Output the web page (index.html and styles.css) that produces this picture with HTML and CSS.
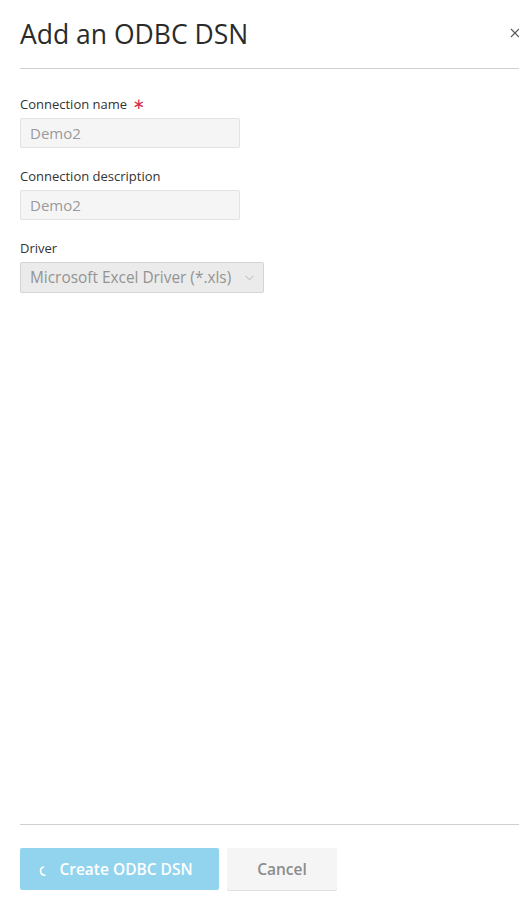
FILE: index.html
```html
<!DOCTYPE html>
<html>
<head>
<meta charset="utf-8">
<link rel="stylesheet" href="styles.css">
</head>
<body>
<div class="dialog">
  <div class="header">
    <h1 class="title">Add an ODBC DSN</h1>
    <svg class="close" width="10" height="10" viewBox="0 0 10 10"><path d="M1 1 L9 9 M9 1 L1 9" fill="none" stroke="#555" stroke-width="1.1"/></svg>
  </div>
  <div class="divider"></div>
  <form class="form">
    <div class="field">
      <label class="label">Connection name <span class="req">∗</span></label>
      <div class="input">Demo2</div>
    </div>
    <div class="field">
      <label class="label">Connection description</label>
      <div class="input">Demo2</div>
    </div>
    <div class="field">
      <label class="label">Driver</label>
      <div class="select">
        <span>Microsoft Excel Driver (*.xls)</span>
        <svg class="chev" width="9" height="6" viewBox="0 0 9 6"><path d="M0.5 0.8 L4.5 4.8 L8.5 0.8" fill="none" stroke="#b5b5b5" stroke-width="1"/></svg>
      </div>
    </div>
  </form>
  <div class="spacer"></div>
  <div class="divider"></div>
  <div class="footer">
    <button class="btn primary" type="button">
      <svg class="spin" width="10" height="12" viewBox="0 0 10 12"><path d="M5.5 2 A4.2 4.2 0 0 0 7 10.2" fill="none" stroke="#fff" stroke-width="1.6" stroke-linecap="round"/></svg>
      Create ODBC DSN
    </button>
    <button class="btn secondary" type="button">Cancel</button>
  </div>
</div>
</body>
</html>
```
FILE: styles.css
```css
html, body {
  margin: 0;
  padding: 0;
  height: 100%;
  overflow: hidden;
  background: #fff;
}
body {
  font-family: "Open Sans", "Liberation Sans", sans-serif;
  color: #333;
}
.dialog {
  width: 502px;
  height: 910px;
  padding: 0 20px;
  display: flex;
  flex-direction: column;
}
.header {
  display: flex;
  align-items: center;
  justify-content: space-between;
  height: 68px;
}
.title {
  margin: 0;
  font-size: 26.5px;
  font-weight: 400;
  color: #2b2b2b;
  line-height: 34px;
  padding-bottom: 1px;
}
.close {
  margin-right: 2px;
  margin-bottom: 2px;
}
.divider {
  height: 1px;
  background: #cfcfcf;
  flex: none;
}
.form {
  padding-top: 26px;
  display: flex;
  flex-direction: column;
  gap: 19px;
}
.field {
  display: flex;
  flex-direction: column;
}
.label {
  font-size: 13px;
  line-height: 18px;
  color: #333;
  margin-bottom: 5px;
}
.req {
  color: #d6304f;
  font-size: 15px;
  font-family: "DejaVu Sans", sans-serif;
  margin-left: 2px;
}
.input {
  width: 200px;
  height: 28px;
  border: 1px solid #e2e2e2;
  background: #f5f5f5;
  border-radius: 2px;
  padding: 0 9px;
  font-size: 15px;
  line-height: 28px;
  color: #9a9a9a;
}
.select {
  width: 224px;
  height: 29px;
  border: 1px solid #d4d4d4;
  background: #ebebeb;
  border-radius: 2px;
  padding: 0 9px;
  font-size: 15.4px;
  line-height: 29px;
  color: #939393;
  display: flex;
  align-items: center;
  justify-content: space-between;
}
.chev {
  margin-top: 1px;
}
.spacer {
  flex: 1;
}
.footer {
  display: flex;
  gap: 8px;
  padding-top: 23px;
  height: 62px;
}
.btn {
  font-family: "Open Sans", "Liberation Sans", sans-serif;
  font-size: 15.5px;
  font-weight: 600;
  height: 42px;
  border-radius: 2px;
  border: none;
  display: flex;
  align-items: center;
  justify-content: center;
  cursor: default;
}
.primary {
  width: 199px;
  background: #92d4ee;
  color: #fff;
  gap: 11px;
  padding: 0 8px 0 0;
}
.spin {
  margin-top: 3px;
}
.secondary {
  width: 110px;
  background: #f5f5f5;
  color: #8c8c8c;
  box-shadow: 0 1px 0 #dedede;
}
```
